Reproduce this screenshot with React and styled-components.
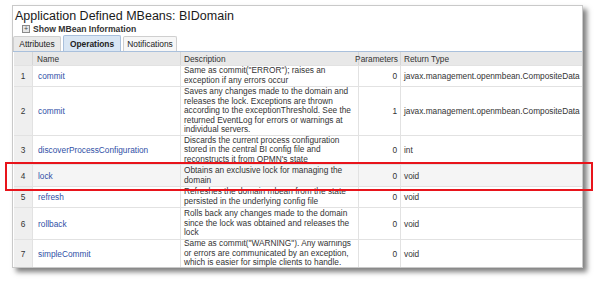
import React from "react";
import styled, { createGlobalStyle } from "styled-components";

const GlobalStyle = createGlobalStyle`
  body {
    margin: 0;
    background: #ffffff;
    font-family: "Liberation Sans", Arial, sans-serif;
  }
`;

const operations = [
  {
    name: "commit",
    desc: ['Same as commit("ERROR"); raises an', "exception if any errors occur"],
    params: 0,
    ret: "javax.management.openmbean.CompositeData",
    height: 21
  },
  {
    name: "commit",
    desc: [
      "Saves any changes made to the domain and",
      "releases the lock. Exceptions are thrown",
      "according to the exceptionThreshold. See the",
      "returned EventLog for errors or warnings at",
      "individual servers."
    ],
    params: 1,
    ret: "javax.management.openmbean.CompositeData",
    height: 49
  },
  {
    name: "discoverProcessConfiguration",
    desc: [
      "Discards the current process configuration",
      "stored in the central BI config file and",
      "reconstructs it from OPMN's state"
    ],
    params: 0,
    ret: "int",
    height: 29
  },
  {
    name: "lock",
    desc: ["Obtains an exclusive lock for managing the", "domain"],
    params: 0,
    ret: "void",
    height: 22,
    shaded: true
  },
  {
    name: "refresh",
    desc: [
      "Refreshes the domain mbean from the state",
      "persisted in the underlying config file"
    ],
    params: 0,
    ret: "void",
    height: 21
  },
  {
    name: "rollback",
    desc: [
      "Rolls back any changes made to the domain",
      "since the lock was obtained and releases the",
      "lock"
    ],
    params: 0,
    ret: "void",
    height: 32
  },
  {
    name: "simpleCommit",
    desc: [
      'Same as commit("WARNING"). Any warnings',
      "or errors are communicated by an exception,",
      "which is easier for simple clients to handle."
    ],
    params: 0,
    ret: "void",
    height: 28
  }
];

const Page = styled.div`
  position: relative;
  width: 600px;
  height: 281px;
  padding: 5px 0 0 12px;
  box-sizing: border-box;
`;

const Frame = styled.div`
  width: 571px;
  height: 263px;
  box-sizing: border-box;
  border: 1px solid #c9c9c9;
  background: #ffffff;
  box-shadow: 4px 4px 5px rgba(0, 0, 0, 0.5);
  overflow: hidden;
  display: flex;
  flex-direction: column;
`;

const Title = styled.div`
  height: 18px;
  padding: 3px 0 0 2px;
  box-sizing: border-box;
  font-size: 12.5px;
  color: #1a1a1a;
  white-space: nowrap;
`;

const InfoToggle = styled.div`
  height: 13px;
  display: flex;
  align-items: center;
  gap: 3px;
  padding-left: 9px;
  font-size: 8.6px;
  font-weight: bold;
  color: #333333;
`;

const PlusBox = styled.span`
  width: 6px;
  height: 6px;
  border: 1px solid #8a8a8a;
  background: #e6e6e6;
  display: flex;
  align-items: center;
  justify-content: center;
  font-size: 7px;
  line-height: 1;
  font-weight: normal;
  color: #444;
`;

const TabBar = styled.div`
  height: 16px;
  margin-top: 1px;
  display: flex;
  align-items: flex-end;
  gap: 2px;
  border-bottom: 1px solid #a9c0dc;
`;

const Tab = styled.div`
  height: ${p => (p.active ? 16 : 15)}px;
  width: ${p => p.w}px;
  box-sizing: border-box;
  display: flex;
  align-items: center;
  justify-content: center;
  font-size: 8.4px;
  font-weight: ${p => (p.active ? "bold" : "normal")};
  color: #222;
  border: 1px solid ${p => (p.active ? "#a9c0dc" : "#cfcfcf")};
  border-bottom: none;
  background: ${p => (p.active ? "#d9e6f4" : p.plain ? "#f7f7f7" : "#e9e9e9")};
  border-radius: 2px 2px 0 0;
`;

const Grid = styled.div`
  display: grid;
  grid-template-columns: 18px 148px 178px 42px 1fr;
  margin-left: 1px;
  font-size: 8.3px;
  color: #333;
`;

const HeadCell = styled.div`
  height: 13px;
  background: #e8e8e8;
  display: flex;
  align-items: center;
  justify-content: ${p => (p.right ? "flex-end" : "flex-start")};
  padding: 0 ${p => (p.right ? 2 : 3)}px 0 ${p => (p.indent ? 4 : 3)}px;
  border-left: ${p => (p.first ? "none" : "1px solid #d6d6d6")};
  box-sizing: border-box;
  white-space: nowrap;
`;

const Cell = styled.div`
  height: ${p => p.h}px;
  display: flex;
  align-items: center;
  justify-content: ${p => (p.center ? "center" : p.right ? "flex-end" : "flex-start")};
  padding: 0 ${p => (p.right ? 3 : 3)}px 0 ${p => (p.indent ? 5 : 3)}px;
  box-sizing: border-box;
  border-top: 1px solid #e2e2e2;
  border-left: ${p => (p.first ? "none" : "1px solid #e2e2e2")};
  background: ${p => (p.num ? "#efefef" : p.shaded ? "#f5f5f5" : "#ffffff")};
  white-space: nowrap;
  overflow: hidden;
`;

const OpLink = styled.span`
  color: #2f4fa6;
`;

const DescLines = styled.div`
  line-height: 9.6px;
`;

const Highlight = styled.div`
  position: absolute;
  left: 5px;
  top: 162px;
  width: 588px;
  height: 29px;
  box-sizing: border-box;
  border: 2px solid #e8141b;
  pointer-events: none;
`;

export default function App() {
  return (
    <Page>
      <GlobalStyle />
      <Frame>
        <Title>Application Defined MBeans: BIDomain</Title>
        <InfoToggle>
          <PlusBox>+</PlusBox>
          Show MBean Information
        </InfoToggle>
        <TabBar>
          <Tab w={48}>Attributes</Tab>
          <Tab w={58} active>
            Operations
          </Tab>
          <Tab w={54} plain>
            Notifications
          </Tab>
        </TabBar>
        <Grid>
          <HeadCell first />
          <HeadCell indent>Name</HeadCell>
          <HeadCell>Description</HeadCell>
          <HeadCell right>Parameters</HeadCell>
          <HeadCell>Return Type</HeadCell>
          {operations.map((op, i) => (
            <React.Fragment key={i}>
              <Cell h={op.height} first num center>
                {i + 1}
              </Cell>
              <Cell h={op.height} indent shaded={op.shaded}>
                <OpLink>{op.name}</OpLink>
              </Cell>
              <Cell h={op.height} shaded={op.shaded}>
                <DescLines>
                  {op.desc.map((line, j) => (
                    <div key={j}>{line}</div>
                  ))}
                </DescLines>
              </Cell>
              <Cell h={op.height} right shaded={op.shaded}>
                {op.params}
              </Cell>
              <Cell h={op.height} shaded={op.shaded}>
                {op.ret}
              </Cell>
            </React.Fragment>
          ))}
        </Grid>
      </Frame>
      <Highlight />
    </Page>
  );
}
